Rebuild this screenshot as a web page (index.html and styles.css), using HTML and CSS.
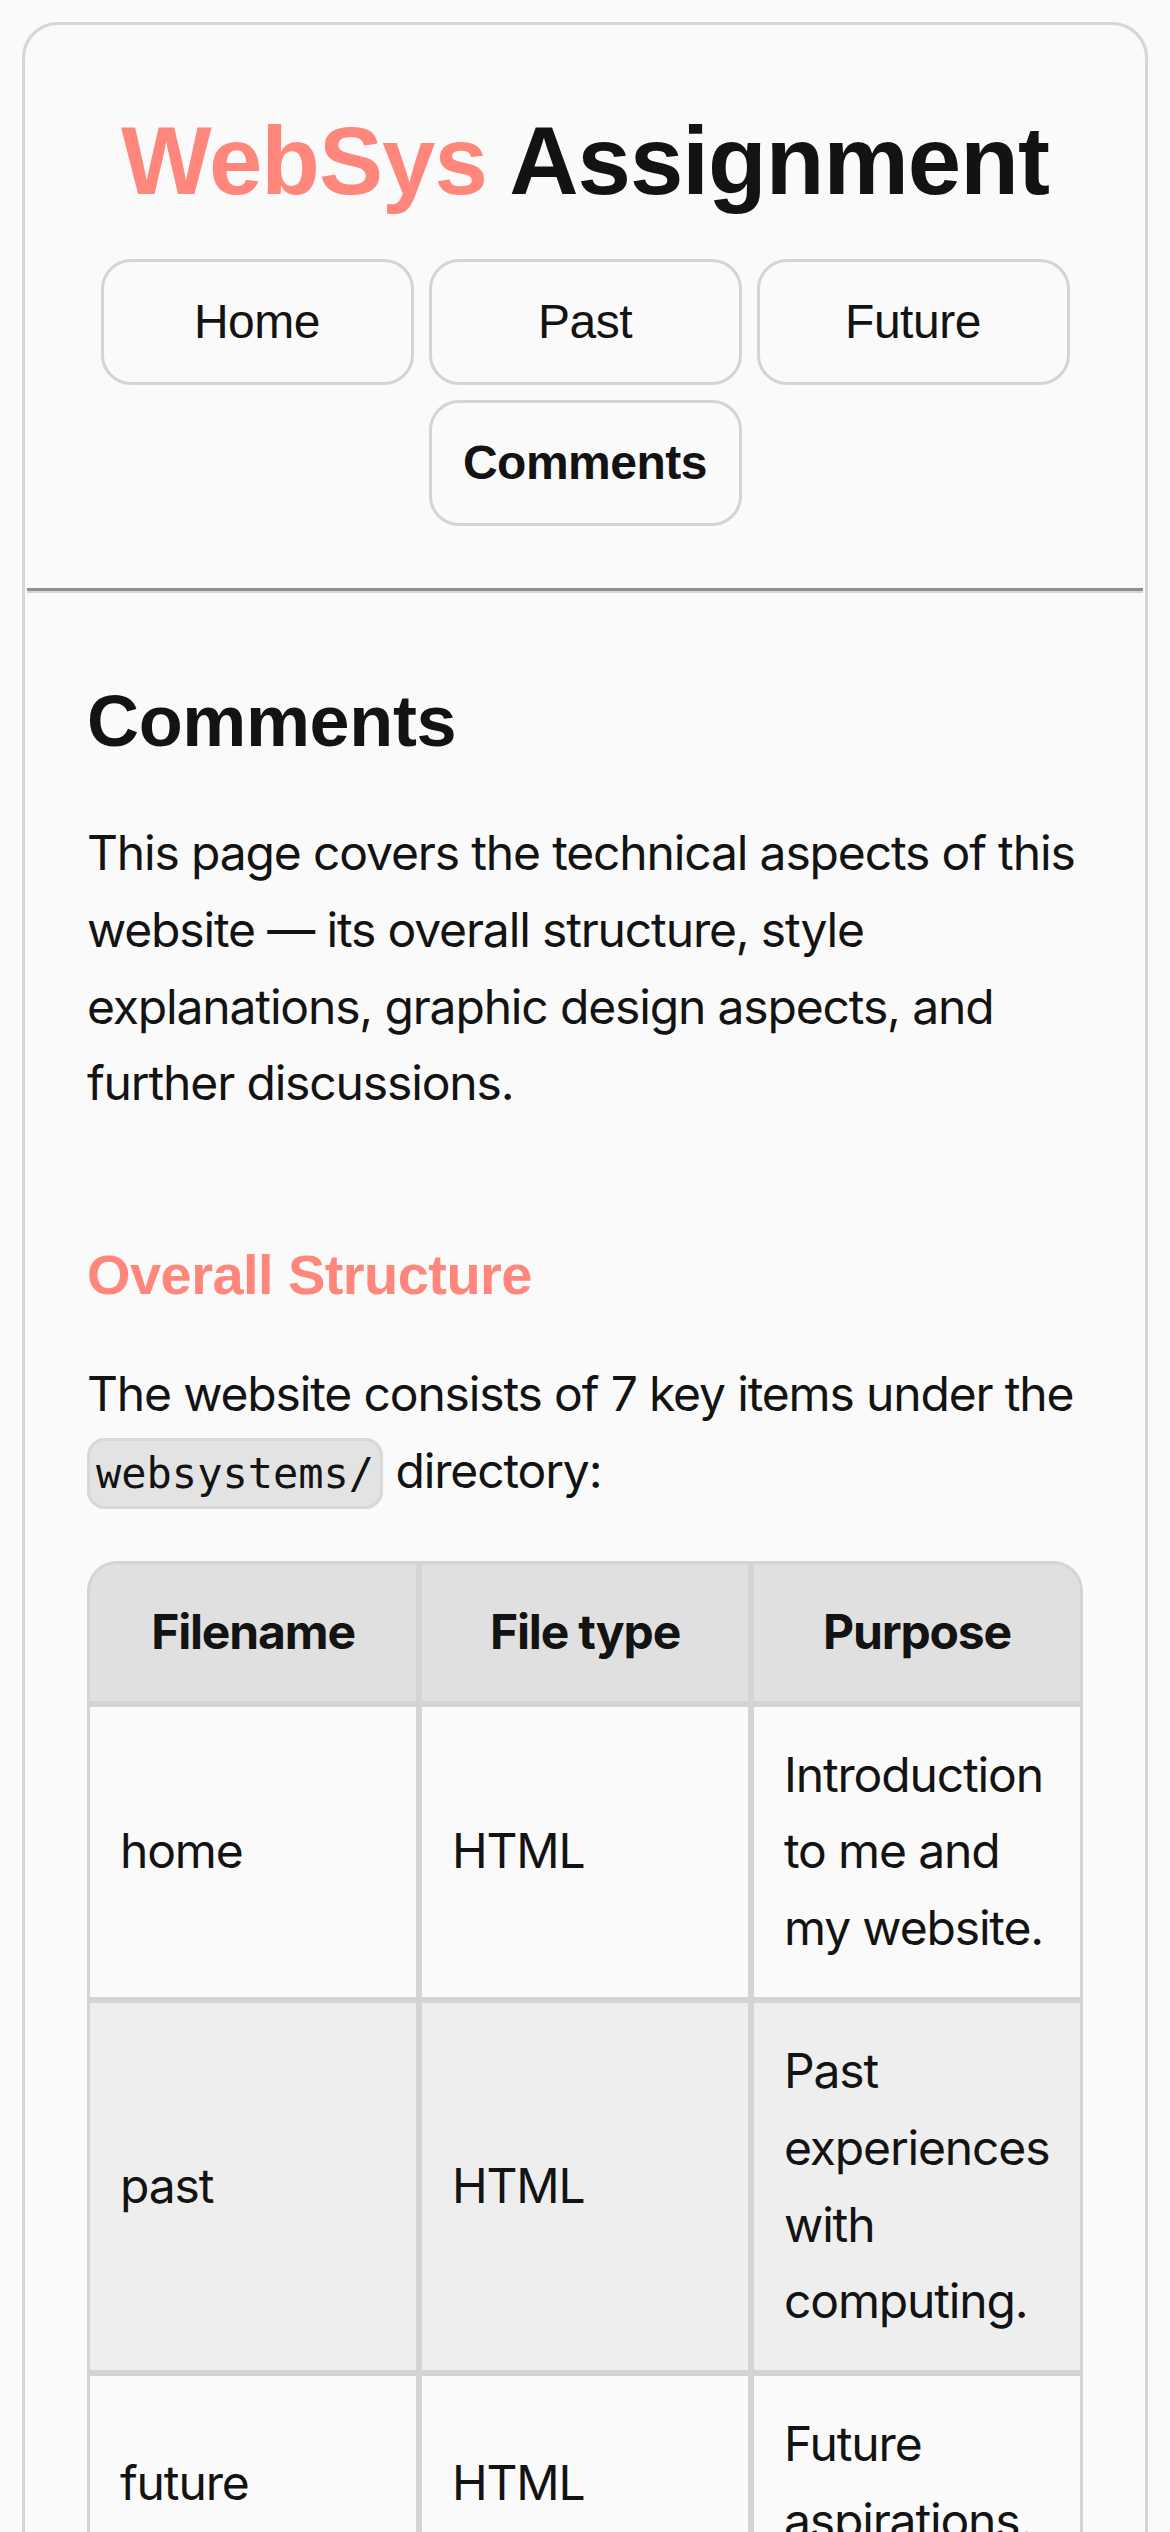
FILE: index.html
```html
<!DOCTYPE html>
<html lang="en">
<head>
    <meta charset="UTF-8">
    <meta name="viewport" content="width=device-width, initial-scale=1.0">
    <title>Comments - WebSys Assignment</title>
    <link rel="stylesheet" href="styles.css">
</head>
<body>

<div class="card">
    <header>
        <h1><span class="accent">WebSys</span> Assignment</h1>
        <nav class="nav">
            <a href="home.html">Home</a>
            <a href="past.html">Past</a>
            <a href="future.html">Future</a>
            <a href="comments.html" class="active">Comments</a>
        </nav>
    </header>
    <hr>

    <main class="content">
        <h2>Comments</h2>
        <p>This page covers the technical aspects of this website — its overall structure, style explanations, graphic design aspects, and further discussions.</p>

        <h3>Overall Structure</h3>
        <p>The website consists of 7 key items under the <code>websystems/</code> directory:</p>

        <table class="files">
            <thead>
                <tr>
                    <th>Filename</th>
                    <th>File type</th>
                    <th>Purpose</th>
                </tr>
            </thead>
            <tbody>
                <tr>
                    <td>home</td>
                    <td>HTML</td>
                    <td>Introduction to me and my website.</td>
                </tr>
                <tr>
                    <td>past</td>
                    <td>HTML</td>
                    <td>Past experiences with computing.</td>
                </tr>
                <tr>
                    <td>future</td>
                    <td>HTML</td>
                    <td>Future aspirations.</td>
                </tr>
                <tr>
                    <td>comments</td>
                    <td>HTML</td>
                    <td>Technical notes on this website.</td>
                </tr>
                <tr>
                    <td>styles</td>
                    <td>CSS</td>
                    <td>Shared styles for every page.</td>
                </tr>
            </tbody>
        </table>
    </main>
</div>

</body>
</html>
```

FILE: styles.css
```css
body { margin: 22px; background: #fafafa; color: #131313; font-family: Inter, "Noto Sans", sans-serif; font-size: 48px; line-height: 1.6; letter-spacing: -0.024em; }

.card { background: #fafafa; border: 3px solid #d6d6d6; border-radius: 36px; box-shadow: 0 0 2px rgba(0,0,0,0.08); }

header { padding: 81px 0 62px; text-align: center; }
h1 { font-family: "Liberation Sans", Arial, sans-serif; font-size: 96px; font-weight: 700; line-height: 110px; margin: 0; letter-spacing: -0.01em; }
h1 .accent { color: #ff867a; }

.nav { display: flex; flex-wrap: wrap; justify-content: center; gap: 15px; margin-top: 43px; }
.nav a { width: 313px; box-sizing: border-box; padding: 30px 0; border: 3px solid #d4d4d4; border-radius: 30px; font-family: "Liberation Sans", Arial, sans-serif; font-size: 48px; line-height: 60px; letter-spacing: -0.01em; color: #131313; text-decoration: none; }
.nav a.active { font-weight: 700; }

hr { margin: 0 2px; border: 0; border-top: 3px solid #8f8f8f; border-bottom: 2px solid #d6d6d6; }

.content { padding: 27px 62px 60px; }
h2 { font-family: "Liberation Sans", Arial, sans-serif; font-size: 72px; font-weight: 700; line-height: 83px; margin: 60px 0 0; letter-spacing: -0.005em; }
h3 { font-family: "Liberation Sans", Arial, sans-serif; font-size: 56px; font-weight: 700; line-height: 64px; margin: 121px 0 0; letter-spacing: -0.01em; color: #ff867a; }
p { margin: 52px 0 0; }
h3 + p { margin-top: 49px; }

code { font-family: "DejaVu Sans Mono", monospace; font-size: 42px; letter-spacing: 0; padding: 8px 6px; background: #e3e3e3; border: 3px solid #d8d8d8; border-radius: 18px; }

.files { width: 100%; margin-top: 51px; table-layout: fixed; border-collapse: separate; border-spacing: 0; }
.files th, .files td { border: 3px solid #d4d4d4; padding: 30px; }
.files th { background: #e0e0e0; font-weight: 700; text-align: center; }
.files th:first-child { border-top-left-radius: 30px; }
.files th:last-child { border-top-right-radius: 30px; }
.files td { text-align: left; vertical-align: middle; background: #fafafa; }
.files tbody tr:nth-child(even) td { background: #eeeeee; }
.files tbody tr:last-child td:first-child { border-bottom-left-radius: 30px; }
.files tbody tr:last-child td:last-child { border-bottom-right-radius: 30px; }
```
